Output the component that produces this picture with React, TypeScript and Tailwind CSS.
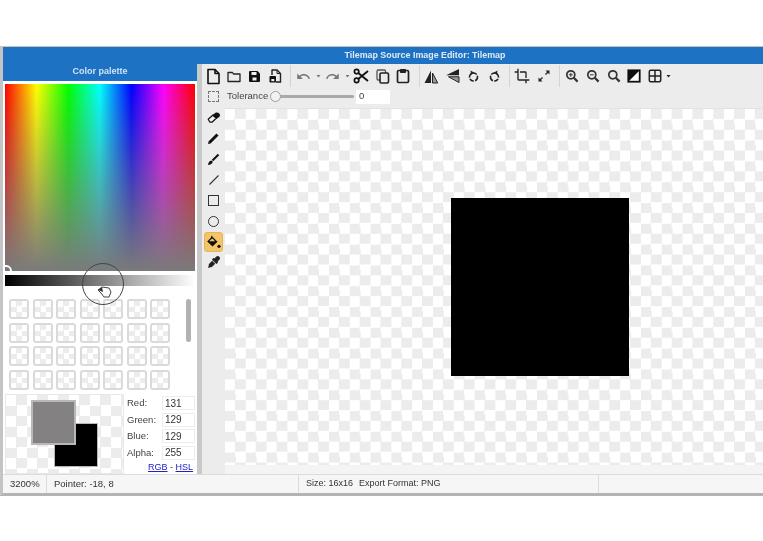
import React from "react";
import { MdUndo, MdRedo, MdCrop } from "react-icons/md";
import { FaEyeDropper } from "react-icons/fa";

const Caret = ({ c = "#777" }: { c?: string }) => (
  <svg width="5" height="4" viewBox="0 0 5 4"><path d="M0.5 1H4.5L2.5 3.5Z" fill={c} /></svg>
);
const Slot = ({ w = 20.7, children }: { w?: number; children: React.ReactNode }) => (
  <div className="flex h-[20px] shrink-0 items-center justify-center" style={{ width: w }}>{children}</div>
);
const NewFile = () => (
  <svg width="15" height="17" viewBox="0 0 15 17" fill="none" stroke="#111" strokeWidth="1.6" strokeLinejoin="round"><path d="M2 1.5H9L13 5.5V15.5H2Z" /><path d="M9 1.5V5.5H13" /></svg>
);
const Folder = () => (
  <svg width="14" height="13" viewBox="0 0 14 13" fill="none" stroke="#222" strokeWidth="1.3" strokeLinejoin="round"><path d="M1 2.5H5.5L6.5 4H13V11.5H1Z" /></svg>
);
const Save = () => (
  <svg width="13" height="13" viewBox="0 0 13 13"><path d="M1 2a1 1 0 0 1 1-1h7.5L12 3.5V11a1 1 0 0 1-1 1H2a1 1 0 0 1-1-1Z" fill="#111" /><rect x="3.5" y="2" width="5" height="3" fill="#eee" /><rect x="4.5" y="7.5" width="4" height="3" fill="#eee" /></svg>
);
const SaveAs = () => (
  <svg width="14" height="16" viewBox="0 0 14 16"><path d="M4 2H9L12.5 5.5V14H8" fill="none" stroke="#222" strokeWidth="1.4" /><path d="M9 2V5.5H12.5" fill="none" stroke="#222" strokeWidth="1" /><path d="M4 1.5V7" stroke="#222" strokeWidth="1.4" /><rect x="1.5" y="8" width="6.5" height="6.5" rx="0.8" fill="#111" /><rect x="3.3" y="11" width="3" height="2.2" fill="#eee" /></svg>
);
const Scissors = () => (
  <svg width="16" height="16" viewBox="0 0 16 16" fill="none" stroke="#111"><circle cx="3.6" cy="3.6" r="2.2" strokeWidth="1.7" /><circle cx="3.6" cy="12.4" r="2.2" strokeWidth="1.7" /><path d="M5.3 5L15 13M5.3 11L15 3" strokeWidth="1.9" /></svg>
);
const Copy = () => (
  <svg width="14" height="15" viewBox="0 0 14 15" fill="none" stroke="#222"><rect x="1" y="1" width="8.5" height="10" rx="1.2" strokeWidth="1.3" stroke="#555" /><rect x="4" y="4" width="8.5" height="10" rx="1.2" fill="#ececec" strokeWidth="1.6" /></svg>
);
const Paste = () => (
  <svg width="14" height="16" viewBox="0 0 14 16"><rect x="1.5" y="2.5" width="11" height="12" rx="1.2" fill="none" stroke="#222" strokeWidth="1.7" /><rect x="4" y="1" width="6" height="4" rx="0.8" fill="#222" /></svg>
);
const FlipH = () => (
  <svg width="16" height="15" viewBox="0 0 16 15"><path d="M7 1.5V14H0.5Z" fill="#222" /><path d="M8.5 4V14H13.7Z" fill="#999" stroke="#222" strokeWidth="1" /></svg>
);
const FlipV = () => (
  <svg width="15" height="16" viewBox="0 0 15 16"><path d="M14 1V7.3H1Z" fill="#222" /><path d="M14 8.8V14.5L3.5 8.8Z" fill="#999" stroke="#222" strokeWidth="1" /></svg>
);
const Rot = ({ flip }: { flip?: boolean }) => (
  <svg width="13" height="14" viewBox="0 0 13 14" className={flip ? "-scale-x-100" : ""}>
    <circle cx="6.5" cy="8" r="4" fill="none" stroke="#222" strokeWidth="1.6" strokeDasharray="4.5 1.3" />
    <path d="M3.5 1.5L7.5 3.7L4 6Z" fill="#222" />
  </svg>
);
const Resize = () => (
  <svg width="14" height="14" viewBox="0 0 14 14"><path d="M8.5 1.5H12.5V5.5Z M1.5 8.5V12.5H5.5Z" fill="#222" /><path d="M11 3L8.5 5.5M3 11L5.5 8.5" stroke="#222" strokeWidth="1.3" /></svg>
);
const Zoom = ({ mode }: { mode: "in" | "out" | "none" }) => (
  <svg width="14" height="14" viewBox="0 0 14 14" fill="none" stroke="#333" strokeWidth="1.7">
    <circle cx="5.8" cy="5.8" r="4" />
    <path d="M8.8 8.8L12.6 12.6" strokeWidth="2.2" />
    {mode !== "none" && <path d="M3.9 5.8H7.7" strokeWidth="1" />}
    {mode === "in" && <path d="M5.8 3.9V7.7" strokeWidth="1" />}
  </svg>
);
const BW = () => (
  <svg width="14" height="14" viewBox="0 0 14 14"><rect x="1.3" y="1.3" width="11.4" height="11.4" fill="#fff" stroke="#111" strokeWidth="1.8" /><path d="M1.3 1.3H12.7L1.3 12.7Z" fill="#111" /></svg>
);
const Grid = () => (
  <svg width="14" height="14" viewBox="0 0 14 14" fill="none" stroke="#222" strokeWidth="1.5"><rect x="1.3" y="1.3" width="11.4" height="11.4" rx="1.5" /><path d="M7 1.3V12.7M1.3 7H12.7" /></svg>
);
const Eraser = () => (
  <svg width="14" height="12" viewBox="0 0 14 12"><path d="M1.2 7.2L6 3L9.5 6L5 10.2H3Z" fill="#f2f2f2" stroke="#111" strokeWidth="1.2" strokeLinejoin="round" /><path d="M5 3.5L8.5 0.8C10 0.2 11.2 0.6 12.2 1.5C13.2 2.6 13.2 3.8 12.4 4.8L9.6 7Z" fill="#111" /></svg>
);
const Pen = () => (
  <svg width="13" height="13" viewBox="0 0 13 13"><path d="M2.5 10.5L10.5 2.5" stroke="#111" strokeWidth="3" /><path d="M1 12L1.6 9.4L3.6 11.4Z" fill="#111" /></svg>
);
const Brush = () => (
  <svg width="13" height="13" viewBox="0 0 13 13"><path d="M5.5 7.5L11.5 1.5" stroke="#111" strokeWidth="2" /><path d="M1 12C1.2 9.6 2.4 7.6 4.4 7.4L5.8 8.8C5.6 10.8 3.4 12 1 12Z" fill="#111" /></svg>
);
const Bucket = () => (
  <svg width="15" height="14" viewBox="0 0 15 14"><path d="M6.2 1.5L11.5 6.8L6.5 11.5L1.2 6.5Z" fill="#111" /><path d="M3.2 6.2H9.2L6.2 3.3Z" fill="#f3c566" /><path d="M5.7 0.8V4" stroke="#111" strokeWidth="1" /><circle cx="13" cy="11.3" r="1.6" fill="#111" /></svg>
);

const swatchRows = [0, 1, 2, 3];
const swatchCols = [0, 1, 2, 3, 4, 5, 6];
const fields = [["Red:", "131"], ["Green:", "129"], ["Blue:", "129"], ["Alpha:", "255"]];

export default function App() {
  return (
    <div className="relative h-[541px] w-[763px] overflow-hidden bg-white pt-[46px] font-['Liberation_Sans',sans-serif] text-[9.5px] text-[#333] blur-[0.35px]">
      <div className="flex h-[450px] w-[763px] flex-col border-l-[3px] border-t border-[#c4c4c4] border-b-[3px] border-b-[#b4b4b4]">
        <div className="flex h-[17px] shrink-0 items-center justify-center bg-[#1e72c3] pl-[84px] text-[8.9px] font-bold text-[#dfeaf6]">
          Tilemap Source Image Editor: Tilemap
        </div>
        <div className="flex min-h-0 flex-1">
          {/* left panel */}
          <div className="flex w-[194px] shrink-0 flex-col bg-white">
            <div className="flex h-[17px] shrink-0 items-center justify-center bg-[#1e72c3] pb-[1px] text-[9px] font-bold text-[#cfe2f5]">
              Color palette
            </div>
            <div className="mx-[2px] mt-[3px] h-[187px] w-[190px] shrink-0 bg-[linear-gradient(to_bottom,transparent,#7a7a7a),linear-gradient(to_right,#f00,#ff0_16.6%,#0f0_33.3%,#0ff_50%,#00f_66.6%,#f0f_83.3%,#f00)]">
            </div>
            <div className="mx-[2px] mt-[4px] h-[11px] w-[190px] shrink-0 bg-[linear-gradient(to_right,#000,#fff)]" />
            <div className="flex h-[108px] shrink-0 pl-[6px] pt-[13px]">
              <div className="flex w-[177px] flex-col gap-[3.5px]">
                {swatchRows.map((r) => (
                  <div key={r} className="flex gap-[3.5px]">
                    {swatchCols.map((c) => (
                      <div key={c} className="h-[20px] w-[20px] rounded-[3px] border-2 border-[#dadada] bg-[conic-gradient(#ececec_25%,#fff_0_50%,#ececec_0_75%,#fff_0)] bg-size-[11px_11px]" />
                    ))}
                  </div>
                ))}
              </div>
              <div className="h-[43px] w-[5px] rounded-full bg-[#b2b2b2]" />
            </div>
            <div className="flex min-h-0 flex-1 pl-[2px]">
              <div className="flex h-[80px] w-[119px] shrink-0 border border-[#e8e8e8] bg-[conic-gradient(#ececec_25%,#fff_0_50%,#ececec_0_75%,#fff_0)] bg-size-[21px_21px] pl-[25px] pt-[5px]">
                <div className="z-10 h-[45px] w-[45px] shrink-0 border-2 border-[#b8b8b8] bg-[#838181]" />
                <div className="-ml-[22px] mt-[23px] h-[44px] w-[44px] shrink-0 border border-[#b8b8b8] bg-black" />
              </div>
              <div className="flex-1 pl-[3px] pt-[1px]">
                {fields.map(([l, v]) => (
                  <div key={l} className="flex h-[16.5px] items-center">
                    <span className="w-[35px] text-[#444]">{l}</span>
                    <span className="flex h-[14px] w-[33px] items-center border border-[#ececec] pl-[2px] text-[10px]">{v}</span>
                  </div>
                ))}
                <div className="mt-[1px] pl-[21px] text-[9px] leading-[11px]">
                  <span className="text-[#2222c8] underline">RGB</span> - <span className="text-[#2222c8] underline">HSL</span>
                </div>
              </div>
            </div>
          </div>
          <div className="w-[5px] shrink-0 bg-[#c9c9c9]" />
          {/* editor */}
          <div className="flex min-w-0 flex-1 flex-col bg-[#ececec]">
            <div className="flex h-[21px] shrink-0 items-center pl-[1px] pt-[3px] text-[#222]">
              <Slot><NewFile /></Slot>
              <Slot><Folder /></Slot>
              <Slot><Save /></Slot>
              <Slot><SaveAs /></Slot>
              <div className="ml-[4px] mr-[5px] h-[22px] w-px shrink-0 bg-[#d4d4d4]" />
              <MdUndo size={15} color="#777" className="shrink-0" />
              <div className="ml-[5px] mr-[4px]"><Caret /></div>
              <MdRedo size={15} color="#777" className="shrink-0" />
              <div className="ml-[5px]"><Caret /></div>
              <Slot w={23}><Scissors /></Slot>
              <Slot w={20}><Copy /></Slot>
              <Slot w={21}><Paste /></Slot>
              <div className="ml-[5px] mr-[2px] h-[22px] w-px shrink-0 bg-[#d4d4d4]" />
              <Slot w={20.75}><FlipH /></Slot>
              <Slot w={20.75}><FlipV /></Slot>
              <Slot w={20.75}><Rot /></Slot>
              <Slot w={20.75}><Rot flip /></Slot>
              <div className="ml-[4px] mr-[2px] h-[22px] w-px shrink-0 bg-[#d4d4d4]" />
              <Slot w={20}><MdCrop size={16} color="#222" /></Slot>
              <Slot w={24}><Resize /></Slot>
              <div className="ml-[3px] mr-[2px] h-[22px] w-px shrink-0 bg-[#d4d4d4]" />
              <Slot w={20.75}><Zoom mode="in" /></Slot>
              <Slot w={20.75}><Zoom mode="out" /></Slot>
              <Slot w={20.75}><Zoom mode="none" /></Slot>
              <Slot w={20.75}><BW /></Slot>
              <Slot w={20.75}><Grid /></Slot>
              <Caret c="#222" />
            </div>
            <div className="flex h-[23px] shrink-0 items-center">
              <div className="flex w-[23px] justify-center">
                <div className="h-[11px] w-[11px] border border-dashed border-[#777]" />
              </div>
              <span className="ml-[2px] w-[45px] text-[#444]">Tolerance</span>
              <div className="relative ml-[4px] h-[3px] w-[78px] rounded-full bg-[#a9a9a9]">
                <div className="absolute -left-[6px] -top-[4px] h-[11px] w-[11px] rounded-full border border-[#a0a0a0] bg-[#f2f2f2]" />
              </div>
              <div className="ml-[2px] flex h-[14px] w-[34px] items-center bg-white pl-[3px] text-[#444]">0</div>
            </div>
            <div className="flex min-h-0 flex-1">
              <div className="flex w-[23px] shrink-0 flex-col items-center text-[#111]">
                <div className="flex h-[20.6px] items-center"><Eraser /></div>
                <div className="flex h-[20.6px] items-center"><Pen /></div>
                <div className="flex h-[20.6px] items-center"><Brush /></div>
                <div className="flex h-[20.6px] items-center">
                  <svg width="12" height="12" viewBox="0 0 12 12"><path d="M1.5 10.5L10.5 1.5" stroke="#333" strokeWidth="1.1" /></svg>
                </div>
                <div className="flex h-[20.6px] items-center"><div className="h-[11px] w-[11px] border-[1.5px] border-[#333]" /></div>
                <div className="flex h-[20.6px] items-center"><div className="h-[11px] w-[11px] rounded-full border-[1.5px] border-[#333]" /></div>
                <div className="flex h-[20px] w-[19px] items-center justify-center rounded-[3px] border border-[#e3b458] bg-[#f3c566]"><Bucket /></div>
                <div className="flex h-[21px] items-center"><FaEyeDropper size={12} color="#222" /></div>
              </div>
              <div className="flex min-w-0 flex-1 flex-col">
                <div className="h-[357px] shrink-0 border-t border-[#e2e2e2] bg-[conic-gradient(#ececec_25%,#fff_0_50%,#ececec_0_75%,#fff_0)] bg-size-[20.8px_20.8px] pl-[226px] pt-[89px]">
                  <div className="h-[178px] w-[178px] bg-black" />
                </div>
                <div className="flex-1 bg-[#f4f4f4]" />
              </div>
            </div>
          </div>
        </div>
        <div className="flex h-[19px] shrink-0 items-center border-t border-[#dcdcdc] bg-[#f6f6f6] text-[#333]">
          <div className="h-full w-[44px] border-r border-[#dcdcdc] pl-[7px] leading-[17px]">3200%</div>
          <div className="h-full w-[252px] border-r border-[#dcdcdc] pl-[7px] leading-[17px]">Pointer: -18, 8</div>
          <div className="h-full w-[300px] border-r border-[#dcdcdc] pl-[7px] text-[9px] leading-[17px]">Size: 16x16<span className="ml-[6px]">Export Format: PNG</span></div>
        </div>
      </div>
      {/* pointer highlight */}
      <div className="absolute left-[82px] top-[263px] h-[42px] w-[42px] rounded-full border border-[#444]" />
      <svg className="absolute left-[97px] top-[284px]" width="16" height="14" viewBox="0 0 16 14">
        <path d="M1 6L5 3L12 4L14 8L12 13H7L4 9Z" fill="#fff" stroke="#444" strokeWidth="1" />
        <path d="M1 6L5 3L6 8Z" fill="#333" />
      </svg>
      {/* picker marker */}
      <div className="absolute left-[0px] top-[265px] h-[12px] w-[12px] rounded-full border-2 border-white" style={{ clipPath: "inset(0 0 6px 5px)" }} />
    </div>
  );
}
